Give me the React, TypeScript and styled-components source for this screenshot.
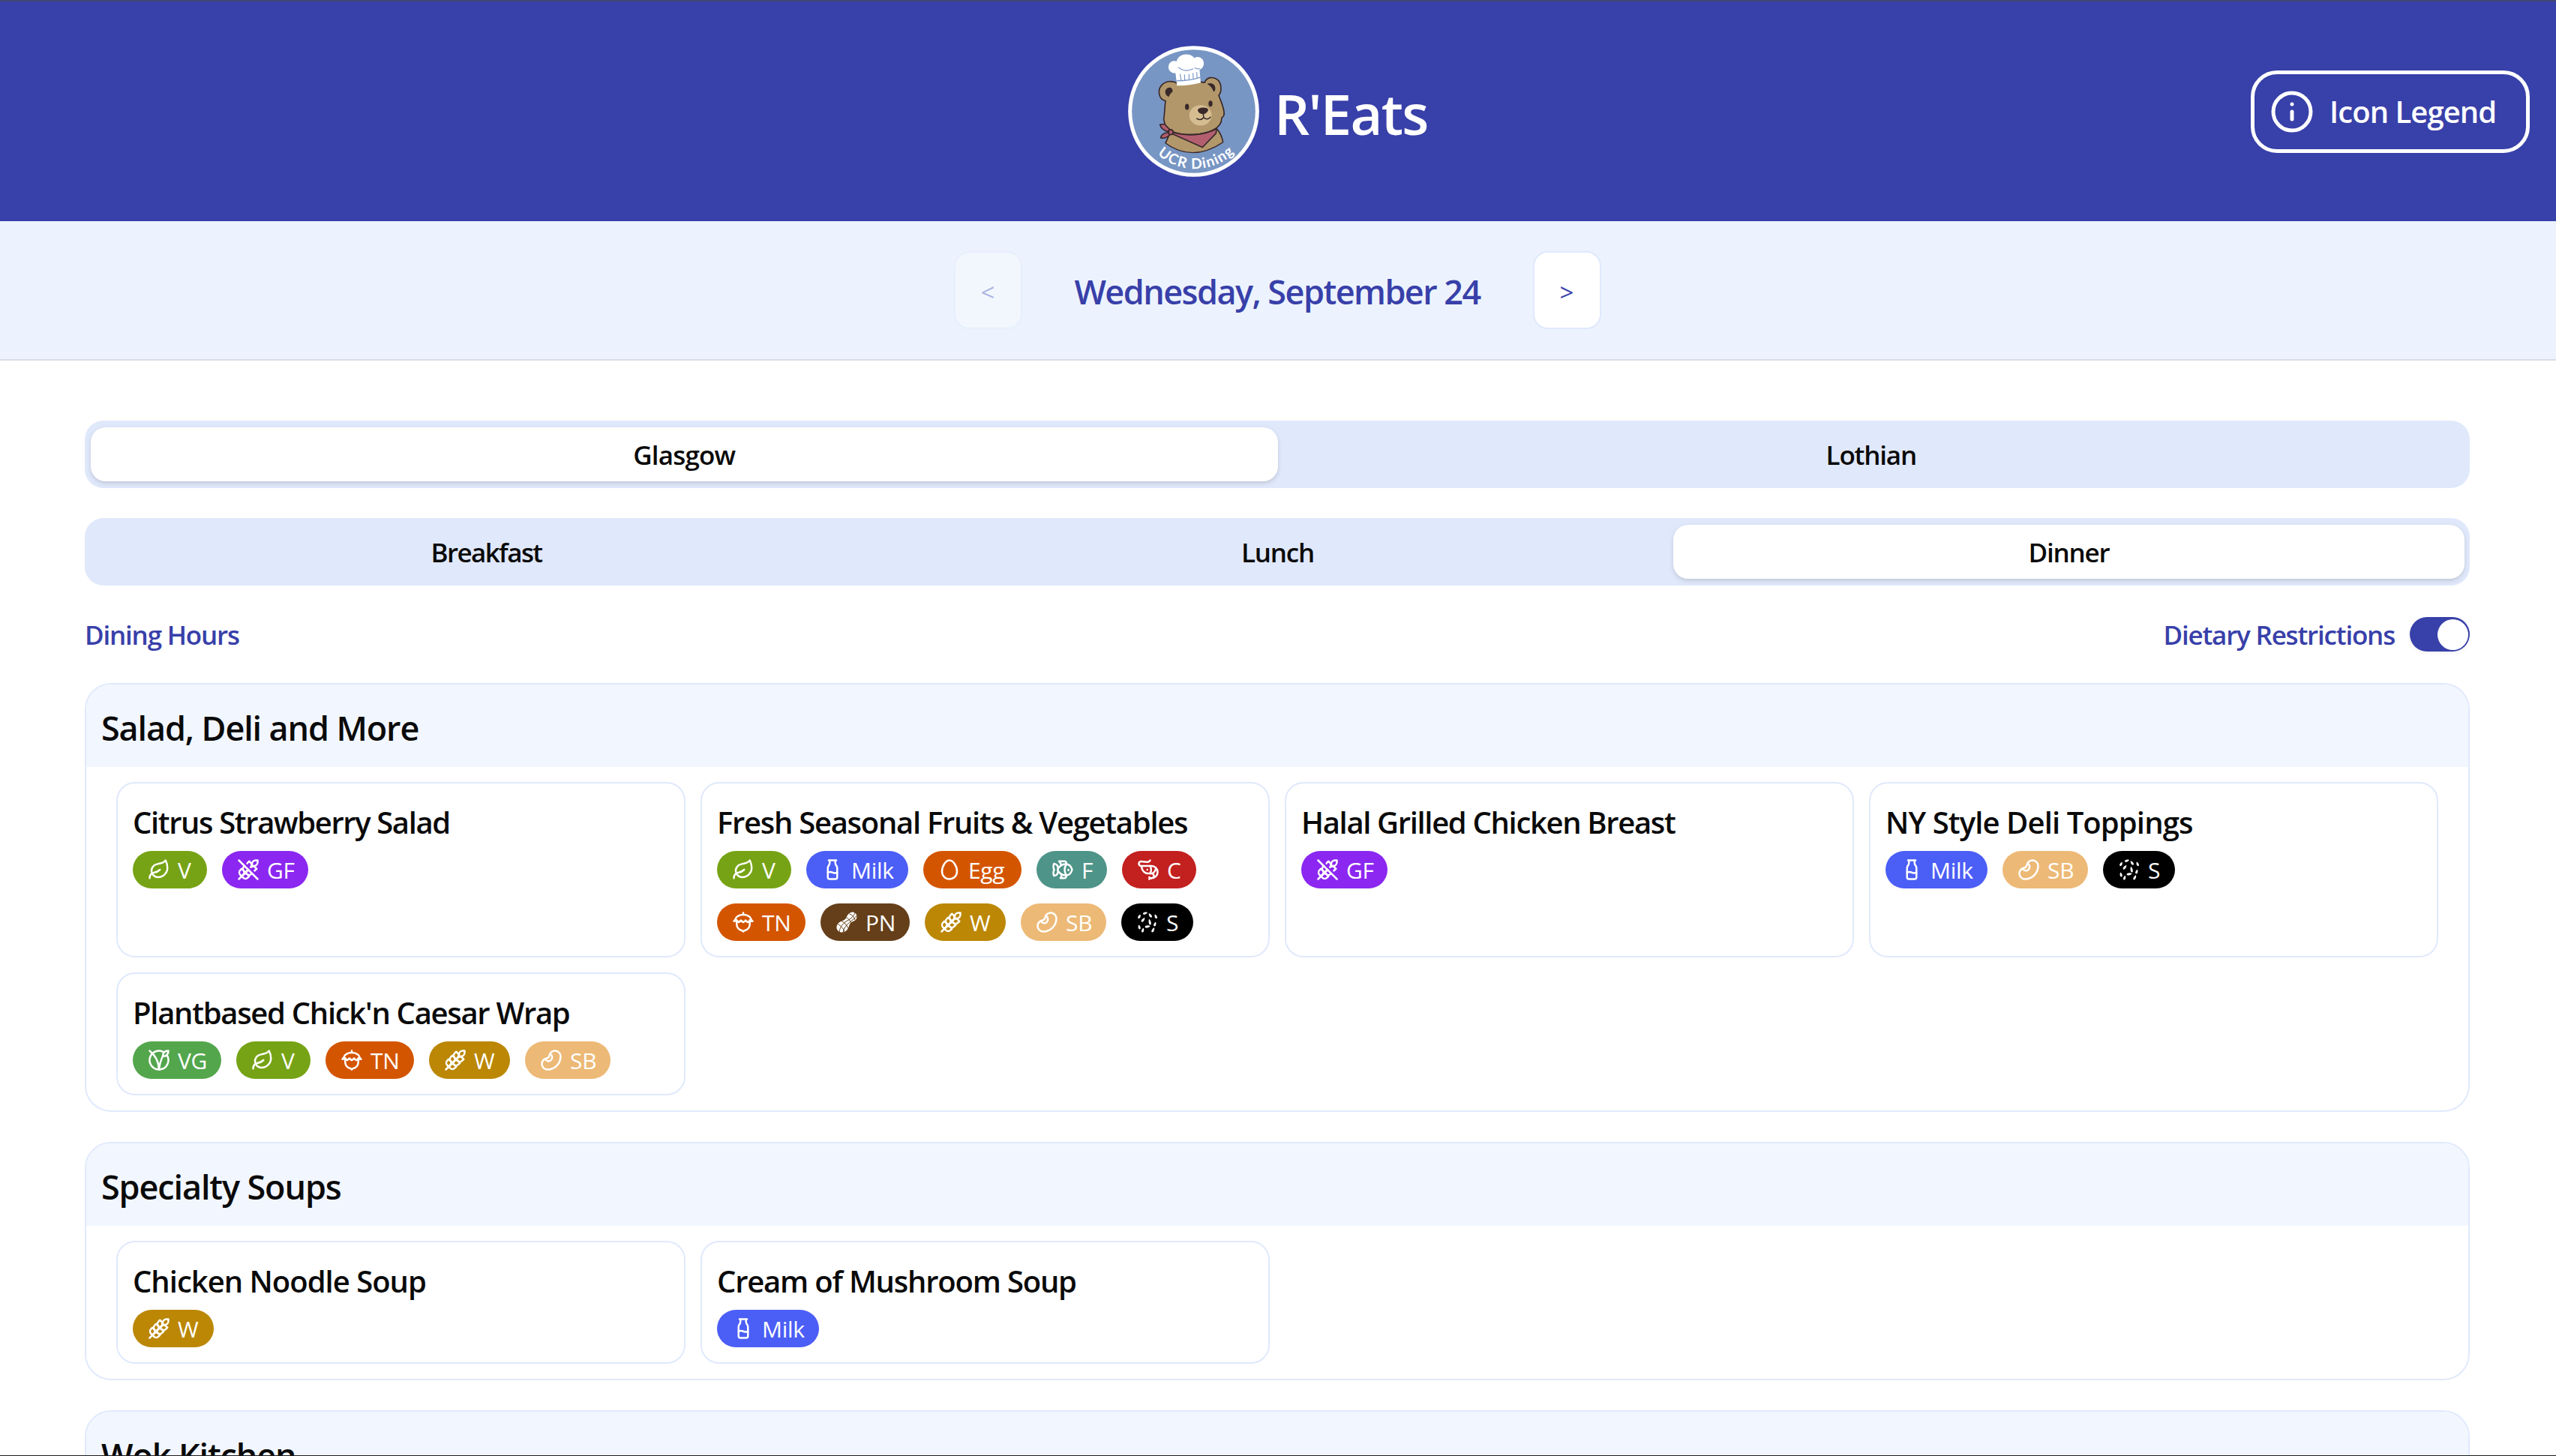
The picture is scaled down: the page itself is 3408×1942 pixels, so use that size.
import React from "react";
import styled, { createGlobalStyle } from "styled-components";
import {
  Bean,
  Egg,
  Fish,
  Info,
  Leaf,
  Milk,
  Nut,
  Shrimp,
  Vegan,
  Wheat,
  WheatOff,
} from "lucide-react";

const brand = "#3840a9";
const line = "#e0e9fc";

const GlobalStyle = createGlobalStyle`
  *, *::before, *::after { box-sizing: border-box; }
  body {
    margin: 0;
    overflow: hidden;
    background: #fff;
    color: #0a0a0a;
    font-family: "Open Sans", "Noto Sans", sans-serif;
  }
  button { font: inherit; color: inherit; background: none; border: 0; padding: 0; }
  h1, h2, h3 { margin: 0; }
`;

const Page = styled.div`
  height: 1942px;
  overflow: hidden;
  border-bottom: 1px solid #1c1c1e;
  display: flex;
  flex-direction: column;
`;

const Header = styled.header`
  flex: none;
  height: 295px;
  border-top: 2px solid #41466f;
  background: ${brand};
  color: #fff;
  display: grid;
  grid-template-columns: 1fr auto 1fr;
  align-items: center;
  padding: 0 35px 0 35px;
`;

const Brand = styled.div`
  grid-column: 2;
  display: flex;
  align-items: center;
  gap: 20px;
  width: 400px;

  svg { flex: none; }
`;

const BrandName = styled.h1`
  font-size: 74px;
  line-height: 100px;
  font-weight: 600;
  letter-spacing: -1.7px;
  padding-top: 7px;
  white-space: nowrap;
`;

const LegendButton = styled.button`
  justify-self: end;
  width: 372px;
  height: 110px;
  border: 5px solid #fff;
  border-radius: 35px;
  padding: 0 20px;
  display: flex;
  align-items: center;
  gap: 20px;
  font-size: 40px;
  font-weight: 600;
  letter-spacing: -0.95px;
  white-space: nowrap;
`;

const DateBar = styled.div`
  flex: none;
  height: 186px;
  background: #ecf3fe;
  border-bottom: 2px solid #d8dde5;
  display: flex;
  align-items: center;
  justify-content: center;
  gap: 68px;
  padding: 0 2px 1px 0;
`;

const DayButton = styled.button<{ $off?: boolean }>`
  width: 91px;
  height: 104px;
  border: 2px solid ${line};
  border-radius: 20px;
  background: #fff;
  color: ${brand};
  font-size: 33px;
  padding-top: 6px;
  opacity: ${(p) => (p.$off ? 0.35 : 1)};
`;

const DateText = styled.h2`
  width: 545px;
  text-align: center;
  font-size: 45px;
  font-weight: 600;
  letter-spacing: -1.55px;
  color: ${brand};
  white-space: nowrap;
  padding-top: 4px;
`;

const Main = styled.main`
  padding: 80px 115px 0 113px;
  display: flex;
  flex-direction: column;
`;

const TabList = styled.div`
  height: 90px;
  display: flex;
  padding: 9px 7px 9px 8px;
  border-radius: 25px;
  background: #e0e8fb;
  margin-bottom: 40px;
`;

const Tab = styled.button<{ $on?: boolean; $track?: number }>`
  flex: 1;
  border-radius: 20px;
  font-size: 35px;
  font-weight: 600;
  letter-spacing: ${(p) => p.$track ?? -1.2}px;
  padding-top: 1px;
  background: ${(p) => (p.$on ? "#fff" : "transparent")};
  box-shadow: ${(p) =>
    p.$on
      ? "0 2.5px 7.5px rgba(0,0,0,.1), 0 2.5px 5px -2.5px rgba(0,0,0,.1)"
      : "none"};
`;

const Options = styled.div`
  height: 50px;
  margin-bottom: 40px;
  display: flex;
  justify-content: space-between;
  align-items: center;
  color: ${brand};
  font-size: 35px;
  font-weight: 600;
  letter-spacing: -1.2px;
`;

const OptionLabel = styled.span`
  padding-top: 1px;
  white-space: nowrap;
`;

const SwitchField = styled.label`
  display: flex;
  align-items: center;
  gap: 20px;
`;

const Switch = styled.span`
  width: 80px;
  height: 46px;
  border-radius: 23px;
  background: ${brand};
  display: flex;
  align-items: center;
  justify-content: flex-end;
  padding: 2px;
  box-shadow: 0 2.5px 5px rgba(0, 0, 0, 0.05);
`;

const Thumb = styled.span`
  width: 41px;
  height: 41px;
  border-radius: 50%;
  background: #fff;
`;

const Station = styled.section`
  border: 2px solid ${line};
  border-radius: 35px;
  overflow: hidden;
  margin-bottom: 40px;
`;

const StationName = styled.h2`
  height: 110px;
  padding: 4px 20px 0;
  background: #f2f6ff;
  font-size: 45px;
  line-height: 108px;
  font-weight: 600;
  letter-spacing: -1.13px;
`;

const DishGrid = styled.div`
  display: grid;
  grid-template-columns: repeat(4, 1fr);
  gap: 20px;
  padding: 20px 40px;
`;

const DishCard = styled.article`
  border: 2px solid ${line};
  border-radius: 25px;
  padding: 20px;
`;

const DishName = styled.h3<{ $track: number }>`
  height: 70px;
  font-size: 40px;
  line-height: 64px;
  font-weight: 600;
  letter-spacing: ${(p) => p.$track}px;
  white-space: nowrap;
`;

const Tags = styled.div`
  display: flex;
  flex-wrap: wrap;
  gap: 20px;
`;

const Tag = styled.span<{ $bg: string; $w: number }>`
  width: ${(p) => p.$w}px;
  height: 50px;
  border-radius: 25px;
  background: ${(p) => p.$bg};
  color: #fff;
  display: flex;
  align-items: center;
  padding-left: 20px;
  gap: 10px;
  font-size: 30px;
  letter-spacing: -0.3px;
  white-space: nowrap;

  svg { flex: none; }
`;

const TagText = styled.span`
  line-height: 50px;
  padding-top: 2px;
`;

function PeanutIcon({ size = 30 }: { size?: number }) {
  return (
    <svg width={size} height={size} viewBox="0 0 30 30" fill="none">
      <path
        d="M20 2.2C23.400.2 28.300 3 28.500 7c.2 3.300-1.700 5.500-4.600 6.800-3.100 1.400-4.600 2.600-5.600 5.500-1.300 4.200-3.300 8.300-8.100 9.200C5.300 29.300.9 25.800 1.500 21.300c.5-4.200 3.400-6.400 7.300-8 3.300-1.400 4.700-2.400 6.100-5.400 1.200-2.700 2.600-4.500 5.100-5.700z"
        fill="#fff"
      />
      <g stroke="#653f1a" strokeWidth="1">
        <path d="M2 17c4 2 9 6 10 11M8 13.500c4 2 7 5 8.500 9M14.500 9c3 1 5 4 6.500 7M18.500 4c4 1 6 4 7.500 8" />
        <path d="M5 28C6 22 9 17 15 13.500S25 7 26 2M10 29c1-6 4-10 8.500-13.500S27 9 28.500 6" />
      </g>
    </svg>
  );
}

const seeds = [
  [12, 3, 72, 3.1],
  [4.2, 7.4, 28, 3],
  [18.6, 5.8, -35, 3.2],
  [26, 7.3, -22, 3],
  [9.2, 11.8, 38, 3.4],
  [18, 14.6, -12, 4],
  [25, 17.5, 18, 3],
  [15.2, 20.8, 80, 3.6],
  [4, 21.5, -14, 3],
  [8.8, 25.6, 16, 3],
  [22.5, 25.3, 26, 3.4],
];

function SesameIcon({ size = 30 }: { size?: number }) {
  return (
    <svg width={size} height={size} viewBox="0 0 30 30" fill="#fff">
      {seeds.map(([x, y, r, l], i) => (
        <path
          key={i}
          d={`M0 ${-l}C2 ${-l / 3} 2 ${l} 0 ${l}S-2 ${-l / 3} 0 ${-l}Z`}
          transform={`translate(${x} ${y}) rotate(${r})`}
        />
      ))}
    </svg>
  );
}

function BearLogo() {
  return (
    <svg width="175" height="175" viewBox="72 62 525 524">
      <circle cx="334.5" cy="324" r="262" fill="#fff" />
      <circle cx="334.5" cy="324" r="247" fill="#7896c4" />
      <g stroke="#38282a" strokeWidth="5" strokeLinejoin="round" strokeLinecap="round">
        <path
          d="M240 410L222 452Q330 530 452 448Q447 415 425 392Z"
          fill="#b1976a"
        />
        <path
          d="M270 212C250 200 222 202 206 220C190 238 195 270 214 279L222 282C219 305 219 325 216 348C212 358 219 366 220 378C228 392 240 400 256 407C300 422 370 420 410 400C436 388 447 370 447 350C455 345 458 337 456 325C452 300 442 280 435 260C448 246 447 212 430 197C412 184 388 186 378 209C345 200 300 203 270 212Z"
          fill="#b1976a"
        />
        <path
          d="M246 406C300 426 380 420 426 394L424 412L370 468L254 416Z"
          fill="#b35f70"
        />
        <path d="M240 398L218 375L200 377Q204 397 231 405Z" fill="#b35f70" />
        <path d="M238 408Q206 410 203 430Q222 436 244 414Z" fill="#b35f70" />
        <ellipse cx="243" cy="407" rx="9" ry="10" fill="#b35f70" />
      </g>
      <path d="M216 450Q330 535 458 446L460 466Q330 552 214 468Z" fill="#7896c4" />
      <path d="M235 266C214 258 218 230 238 229C247 229 252 237 250 246C243 251 239 257 235 266Z" fill="#38282a" />
      <path d="M389 214C404 206 421 216 421 230C422 239 419 244 414 245C410 232 401 222 389 214Z" fill="#38282a" />
      <ellipse cx="362" cy="340" rx="45" ry="41" fill="#d5bd91" />
      <ellipse cx="308" cy="306" rx="8" ry="12" fill="#38282a" />
      <ellipse cx="402" cy="293" rx="8" ry="12" fill="#38282a" />
      <path d="M351 320C351 306 394 306 393 319C391 328 380 335 373 335C365 335 352 329 351 320Z" fill="#38282a" />
      <path
        d="M373 334L375 349M347 353Q364 363 375 349Q389 361 402 347"
        fill="none"
        stroke="#38282a"
        strokeWidth="4.5"
        strokeLinecap="round"
      />
      <path
        d="M268 221L262 171C242 172 232 157 234 143C237 126 252 118 266 124C272 102 292 94 308 96C323 97 333 104 338 111C352 100 374 110 375 130C376 146 367 155 358 157L363 209Q315 222 268 221Z"
        fill="#fff"
      />
      <path
        d="M274 148Q300 170 332 154M340 150Q348 156 358 153M266 202Q320 202 361 188M281 176L284 198M298 178L299 198M316 176V196M332 172L333 193M347 168L348 190"
        fill="none"
        stroke="#7896c4"
        strokeWidth="3.5"
        strokeLinecap="round"
      />
      <path id="logo-arc" d="M166 471A225 225 0 0 0 520 464" fill="none" />
      <text
        fill="#fff"
        fontFamily="Lato, sans-serif"
        fontWeight="700"
        fontSize="58"
      >
        <textPath href="#logo-arc" startOffset="50%" textAnchor="middle" textLength="338">
          UCR Dining
        </textPath>
      </text>
    </svg>
  );
}

type IconType = React.ComponentType<{ size?: number }>;

const tags: Record<string, { bg: string; w: number; Icon: IconType }> = {
  V: { bg: "#76a315", w: 99, Icon: Leaf },
  VG: { bg: "#53a64c", w: 118, Icon: Vegan },
  GF: { bg: "#8b27f0", w: 115, Icon: WheatOff },
  Milk: { bg: "#4b5ef5", w: 136, Icon: Milk },
  Egg: { bg: "#d45500", w: 131, Icon: Egg },
  F: { bg: "#4e9488", w: 94, Icon: Fish },
  C: { bg: "#c32020", w: 99, Icon: Shrimp },
  TN: { bg: "#d45500", w: 118, Icon: Nut },
  PN: { bg: "#653f1a", w: 119, Icon: PeanutIcon },
  W: { bg: "#bb8705", w: 108, Icon: Wheat },
  SB: { bg: "#edb976", w: 114, Icon: Bean },
  S: { bg: "#000", w: 96, Icon: SesameIcon },
};

interface Dish {
  name: string;
  track: number;
  tags: string[];
}

const stations: { name: string; dishes: Dish[] }[] = [
  {
    name: "Salad, Deli and More",
    dishes: [
      { name: "Citrus Strawberry Salad", track: -1.38, tags: ["V", "GF"] },
      {
        name: "Fresh Seasonal Fruits & Vegetables",
        track: -1.28,
        tags: ["V", "Milk", "Egg", "F", "C", "TN", "PN", "W", "SB", "S"],
      },
      { name: "Halal Grilled Chicken Breast", track: -1.34, tags: ["GF"] },
      { name: "NY Style Deli Toppings", track: -0.9, tags: ["Milk", "SB", "S"] },
      {
        name: "Plantbased Chick'n Caesar Wrap",
        track: -1.3,
        tags: ["VG", "V", "TN", "W", "SB"],
      },
    ],
  },
  {
    name: "Specialty Soups",
    dishes: [
      { name: "Chicken Noodle Soup", track: -1, tags: ["W"] },
      { name: "Cream of Mushroom Soup", track: -1.2, tags: ["Milk"] },
    ],
  },
  { name: "Wok Kitchen", dishes: [] },
];

export default function App() {
  return (
    <>
      <GlobalStyle />
      <Page>
        <Header>
          <Brand>
            <BearLogo />
            <BrandName>R'Eats</BrandName>
          </Brand>
          <LegendButton>
            <Info size={60} />
            Icon Legend
          </LegendButton>
        </Header>
        <DateBar>
          <DayButton $off disabled>
            &lt;
          </DayButton>
          <DateText>Wednesday, September 24</DateText>
          <DayButton>&gt;</DayButton>
        </DateBar>
        <Main>
          <TabList>
            <Tab $on $track={-0.8}>Glasgow</Tab>
            <Tab>Lothian</Tab>
          </TabList>
          <TabList>
            <Tab $track={-1.6}>Breakfast</Tab>
            <Tab>Lunch</Tab>
            <Tab $on>Dinner</Tab>
          </TabList>
          <Options>
            <OptionLabel>Dining Hours</OptionLabel>
            <SwitchField>
              <OptionLabel>Dietary Restrictions</OptionLabel>
              <Switch>
                <Thumb />
              </Switch>
            </SwitchField>
          </Options>
          {stations.map((s) => (
            <Station key={s.name}>
              <StationName>{s.name}</StationName>
              {s.dishes.length > 0 && (
                <DishGrid>
                  {s.dishes.map((d) => (
                    <DishCard key={d.name}>
                      <DishName $track={d.track}>{d.name}</DishName>
                      <Tags>
                        {d.tags.map((t) => {
                          const { bg, w, Icon } = tags[t];
                          return (
                            <Tag key={t} $bg={bg} $w={w}>
                              <Icon size={30} />
                              <TagText>{t}</TagText>
                            </Tag>
                          );
                        })}
                      </Tags>
                    </DishCard>
                  ))}
                </DishGrid>
              )}
            </Station>
          ))}
        </Main>
      </Page>
    </>
  );
}
